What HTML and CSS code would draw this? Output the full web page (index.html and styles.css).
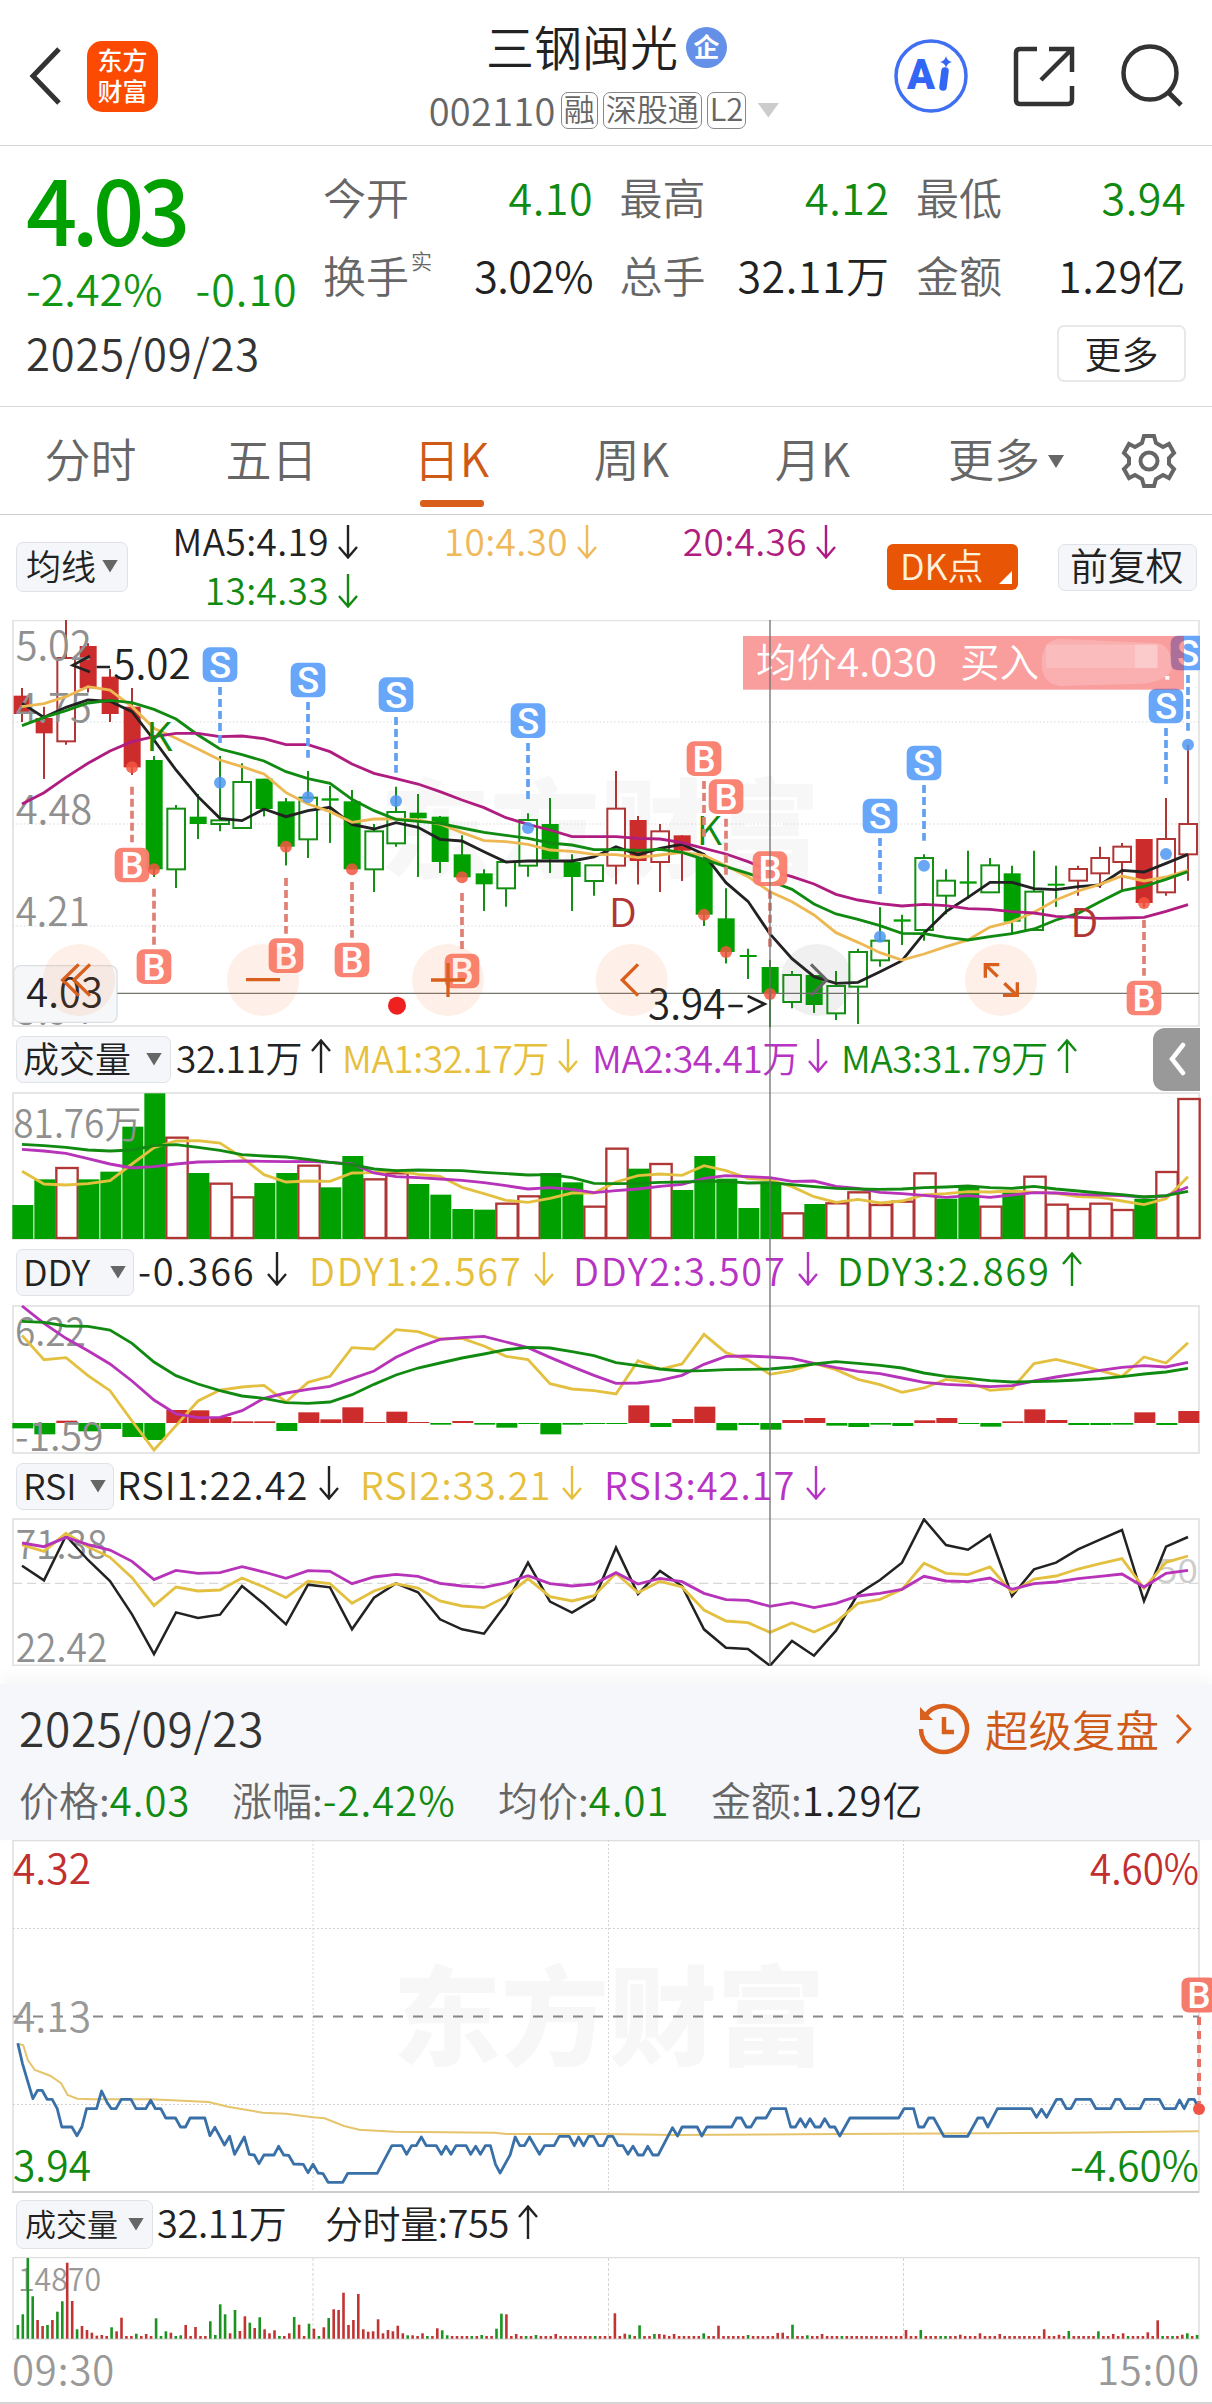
FILE: index.html
```html
<!DOCTYPE html>
<html lang="zh-CN">
<head>
<meta charset="utf-8">
<title>三钢闽光 002110</title>
<link rel="stylesheet" href="styles.css">
</head>
<body>
<svg class="defs" width="0" height="0">
  <symbol id="down" viewBox="0 0 20 34"><path d="M10 0V32M1 22L10 32.500L19 22" fill="none" stroke="currentColor" stroke-width="2.400"/></symbol>
  <symbol id="up" viewBox="0 0 20 34"><path d="M10 34V2M1 12L10 1.500L19 12" fill="none" stroke="currentColor" stroke-width="2.400"/></symbol>
</svg>

<header class="topbar">
  <div class="top-left">
    <svg width="32" height="60" viewBox="0 0 32 60"><path d="M30 3L4 30L30 57" fill="none" stroke="#333" stroke-width="5"/></svg>
    <div class="logo"><span>东方</span><span>财富</span></div>
  </div>
  <div class="top-title">
    <div class="name">三钢闽光<span class="ent">企</span></div>
    <div class="code"><span class="num">002110</span><span class="tag">融</span><span class="tag">深股通</span><span class="tag">L2</span><i class="tri tri-light"></i></div>
  </div>
  <div class="top-right">
    <svg width="74" height="74" viewBox="0 0 74 74"><circle cx="37" cy="37" r="35" fill="#fff" stroke="#3f6ff2" stroke-width="3.500"/><text x="13" y="50" class="ai" textLength="28" lengthAdjust="spacingAndGlyphs">A</text><path d="M51 32L49 48" stroke="#3366f5" stroke-width="7.500" stroke-linecap="round"/><path d="M52 17Q53 22 58 23Q53 24 52 29Q51 24 46 23Q51 22 52 17Z" fill="#3366f5"/></svg>
    <svg width="62" height="62" viewBox="0 0 62 62" fill="none" stroke="#333" stroke-width="4.500"><path d="M24 4H7Q3 4 3 8V55Q3 59 7 59H55Q59 59 59 55V41"/><path d="M36 4H59V27M58 5L28 35"/></svg>
    <svg width="64" height="64" viewBox="0 0 64 64" fill="none" stroke="#333" stroke-width="4.500"><circle cx="30" cy="29" r="26.500"/><path d="M48 48L61 61" stroke-width="5"/></svg>
  </div>
</header>

<section class="quote">
  <div class="price">
    <div class="last">4.03</div>
    <div class="change"><span>-2.42%</span><span>-0.10</span></div>
    <div class="day">2025/09/23</div>
  </div>
  <div class="stats">
    <div class="stat"><span>今开</span><b class="green">4.10</b></div>
    <div class="stat"><span>最高</span><b class="green">4.12</b></div>
    <div class="stat"><span>最低</span><b class="green">3.94</b></div>
    <div class="stat"><span>换手<sup>实</sup></span><b class="pct">3.02%</b></div>
    <div class="stat"><span>总手</span><b>32.11万</b></div>
    <div class="stat"><span>金额</span><b>1.29亿</b></div>
    <button class="more">更多</button>
  </div>
</section>

<nav class="tabs">
  <span>分时</span><span>五日</span><span class="on">日K</span><span>周K</span><span>月K</span><span>更多<i class="tri"></i></span>
  <svg width="56" height="56" viewBox="-28 -28 56 56" fill="none" stroke="#666" stroke-width="4"><path id="gear" d="M-5 -25H5L7 -18L14 -14L20 -17L25 -8L20 -3V3L25 8L20 17L14 14L7 18L5 25H-5L-7 18L-14 14L-20 17L-25 8L-20 3V-3L-25 -8L-20 -17L-14 -14L-7 -18Z"/><circle r="8.500"/></svg>
</nav>

<div class="stack">
  <div class="mabar">
    <span class="pill pill-ma">均线<i class="tri"></i></span>
    <div class="malist">
      <span>MA5:4.19<svg><use href="#down"/></svg></span>
      <span class="amber">10:4.30<svg><use href="#down"/></svg></span>
      <span class="magenta">20:4.36<svg><use href="#down"/></svg></span>
      <span class="green">13:4.33<svg><use href="#down"/></svg></span>
    </div>
    <span class="dk">DK点</span>
    <span class="pill pill-adj">前复权</span>
  </div>
  <svg id="kline" class="chart" width="1212" height="407" viewBox="0 60 3636 1221"></svg>

  <div class="bar bar-vol">
    <span class="pill">成交量<i class="tri"></i></span>
    <span>32.11万<svg><use href="#up"/></svg></span>
    <span class="yellow">MA1:32.17万<svg><use href="#down"/></svg></span>
    <span class="purple">MA2:34.41万<svg><use href="#down"/></svg></span>
    <span class="green">MA3:31.79万<svg><use href="#up"/></svg></span>
    <span class="fold"><svg viewBox="0 0 20 34"><path d="M16 3L5 17L16 31" fill="none" stroke="#fff" stroke-width="4.500" stroke-linecap="round"/></svg></span>
  </div>
  <svg id="vol" class="chart" width="1212" height="148" viewBox="0 216 3636 444"></svg>

  <div class="bar bar-ddy">
    <span class="pill">DDY<i class="tri"></i></span>
    <span>-0.366<svg><use href="#down"/></svg></span>
    <span class="yellow">DDY1:2.567<svg><use href="#down"/></svg></span>
    <span class="purple">DDY2:3.507<svg><use href="#down"/></svg></span>
    <span class="green">DDY3:2.869<svg><use href="#up"/></svg></span>
  </div>
  <svg id="ddy" class="chart" width="1212" height="149" viewBox="0 855 3636 447"></svg>

  <div class="bar bar-rsi">
    <span class="pill">RSI<i class="tri"></i></span>
    <span>RSI1:22.42<svg><use href="#down"/></svg></span>
    <span class="yellow">RSI2:33.21<svg><use href="#down"/></svg></span>
    <span class="purple">RSI3:42.17<svg><use href="#down"/></svg></span>
  </div>
  <svg id="rsi" class="chart" width="1212" height="148" viewBox="0 204 3636 444"></svg>
  <i class="cross"></i>
</div>

<section class="replay">
  <div class="replay-head">
    <span class="replay-day">2025/09/23</span>
    <a class="replay-link">
      <svg width="54" height="54" viewBox="0 0 54 54" fill="none" stroke="#d95f1c" stroke-width="4.500"><path d="M5 27A23 23 0 1 0 9 14"/><path d="M4 5V18H17Z" fill="#d95f1c" stroke="none"/><path d="M28 15V30H38"/></svg>
      超级复盘
      <svg width="20" height="32" viewBox="0 0 20 32"><path d="M3 2L16 16L3 30" fill="none" stroke="#d95f1c" stroke-width="2.800"/></svg>
    </a>
  </div>
  <div class="replay-row">
    <span>价格:<b class="green">4.03</b></span><span>涨幅:<b class="green">-2.42%</b></span><span>均价:<b class="green">4.01</b></span><span>金额:<b>1.29亿</b></span>
  </div>
</section>

<svg id="minute" class="chart" width="1212" height="353" viewBox="0 1840 1212 353"></svg>
<div class="bar bar-min">
  <span class="pill">成交量<i class="tri"></i></span>
  <span>32.11万</span>
  <span>分时量:755<svg><use href="#up"/></svg></span>
</div>
<svg id="minvol" class="chart" width="1212" height="83" viewBox="0 2257 1212 83"></svg>
<footer class="times"><span>09:30</span><span>15:00</span></footer>
<script src="charts.js"></script>
</body>
</html>
```
FILE: styles.css
```css
* { box-sizing: border-box; }
body {
  margin: 0;
  width: 1212px;
  height: 2404px;
  overflow: hidden;
  background: #fff;
  color: #222;
  font-family: "Noto Sans CJK SC", "Noto Sans", sans-serif;
  font-weight: 350;
}
b { font-weight: inherit; }
svg { display: block; flex: none; }
.defs { position: absolute; }
.green { color: #118a11; }
.amber { color: #efb95a; }
.yellow { color: #e6c03c; }
.magenta { color: #b01d80; }
.purple { color: #b733c4; }
.tri {
  width: 16px;
  height: 13px;
  background: #666;
  clip-path: polygon(0 0, 100% 0, 50% 100%);
  flex: none;
}
.tri-light { width: 22px; height: 15px; background: #ccc; margin-left: 6px; }

.topbar {
  height: 146px;
  border-bottom: 1px solid #d4d4d4;
  display: grid;
  grid-template-columns: 1fr auto 1fr;
  padding: 0 28px 0 29px;
}
.top-left { display: flex; align-items: center; gap: 26px; padding-top: 7px; }
.logo {
  width: 71px;
  height: 71px;
  border-radius: 15px;
  background: #fd4a03;
  color: #fff;
  font-weight: 500;
  font-size: 25px;
  line-height: 31px;
  display: flex;
  flex-direction: column;
  align-items: center;
  padding-top: 3px;
}
.top-title { display: flex; flex-direction: column; align-items: center; }
.name {
  font-size: 48px;
  line-height: 60px;
  padding-top: 15px;
  display: flex;
  align-items: center;
}
.ent {
  width: 41px;
  height: 41px;
  margin: 5px 0 0 8px;
  border-radius: 50%;
  background: #6490e8;
  color: #fff;
  font-size: 26px;
  line-height: 37px;
  text-align: center;
  font-weight: 700;
}
.code { display: flex; align-items: center; gap: 5px; color: #666; height: 38px; margin-top: 16px; padding-right: 5px; }
.num { font-size: 38px; line-height: 34px; letter-spacing: 0.300px; }
.tag {
  height: 37px;
  border: 1.500px solid #888;
  border-radius: 7px;
  font-size: 31px;
  line-height: 30px;
  padding: 0 2px;
}
.top-right { display: flex; align-items: center; justify-content: flex-end; gap: 45px; padding-top: 7px; }
.ai { font: 900 42px Roboto, sans-serif; fill: #3366f5; }

.quote { display: flex; height: 261px; border-bottom: 1px solid #d9d9d9; padding-left: 26px; }
.price { width: 297px; color: #119611; }
.last { font-size: 90px; font-weight: 500; line-height: 100px; letter-spacing: -5.500px; margin-top: 11px; color: #00a000; height: 100px; }
.change { display: flex; gap: 33px; font-size: 43px; line-height: 60px; white-space: nowrap; }
.change span:last-child { letter-spacing: 1px; }
.day { font-size: 43.500px; line-height: 60px; letter-spacing: 0.900px; color: #333; margin-top: 6px; }
.stats {
  display: grid;
  grid-template-columns: 269px 269px 269px;
  grid-template-rows: 78px 78px 58px;
  column-gap: 27.500px;
  padding-top: 11px;
}
.stat { display: flex; justify-content: space-between; font-size: 43px; line-height: 78px; color: #666; position: relative; white-space: nowrap; }
.stat b { color: #222; letter-spacing: 0.500px; margin-right: -1px; }
.stat .pct { letter-spacing: -0.600px; }
.stat b.green { color: #118a11; }
.stat sup { font-size: 21px; line-height: 20px; vertical-align: 24px; margin-left: 2px; }
.more {
  grid-column: 3;
  justify-self: end;
  width: 129px;
  height: 57px;
  margin: 12px -1px 0 0;
  border: 2px solid #e8e8e8;
  border-radius: 7px;
  background: #fff;
  font: inherit;
  font-size: 37px;
  line-height: 45px;
  padding: 0;
  color: #222;
}

.tabs {
  height: 108px;
  border-bottom: 1px solid #ccc;
  display: grid;
  grid-template-columns: repeat(5, 181px) 194px 56px;
  align-items: center;
  color: #666;
  font-size: 46px;
  line-height: 101px;
}
.tabs span { text-align: center; height: 107px; position: relative; }
.tabs span:nth-child(4), .tabs span:nth-child(5) { padding-right: 4px; }
.tabs .tri { display: inline-block; margin: 0 0 9px 8px; }
.tabs span:nth-child(6) { padding-left: 8px; }
.tabs svg { margin-left: 22px; }
.tabs .on { color: #cf5a18; padding-right: 2px; }
.tabs .on::after {
  content: "";
  position: absolute;
  left: 58px;
  bottom: 7px;
  width: 64px;
  height: 7px;
  border-radius: 3px;
  background: #d95e1c;
}

.stack { position: relative; }
.pill {
  display: flex;
  align-items: center;
  border: 1.500px solid #dfe2e6;
  border-radius: 7px;
  background: #f5f6f9;
  color: #222;
  font-size: 36px;
  line-height: 1;
}
.mabar { display: flex; height: 105px; padding: 27px 0 0 16px; font-size: 37px; }
.pill-ma { width: 112px; height: 50px; font-size: 35px; padding: 0 0 6px 9px; gap: 6px; }
.pill-ma .tri { margin-top: 4px; }
.malist {
  display: grid;
  grid-template-columns: 199px 239px 239px;
  grid-template-rows: 49px 50px;
  width: 736px;
  margin-top: -27px;
  padding: 3px 0 0 31px;
  line-height: 45px;
  letter-spacing: 0.400px;
}
.malist span { display: flex; justify-content: flex-end; gap: 9px; }
.malist svg, .bar > span > svg { width: 20px; height: 34px; margin-top: 7px; }
.dk {
  position: relative;
  width: 131px;
  height: 46px;
  margin: 2px 40px 0 23px;
  border-radius: 6px;
  background: #e85504;
  color: #fff0dc;
  font-size: 36px;
  line-height: 41px;
  padding-left: 13px;
}
.dk::after {
  content: "";
  position: absolute;
  right: 6px;
  bottom: 6px;
  width: 13px;
  height: 13px;
  background: #fff;
  clip-path: polygon(100% 0, 100% 100%, 0 100%);
}
.pill-adj { width: 139px; height: 47px; margin-top: 2px; font-size: 38px; padding: 0 0 7px 11px; letter-spacing: -0.300px; }

.bar { display: grid; height: 65px; padding-left: 16px; font-size: 38px; line-height: 60px; white-space: nowrap; }
.bar > span { display: flex; }
.bar > span > svg { margin: 12px 0 0 9px; }
.bar .pill { height: 47px; margin-top: 9px; padding: 0 8px 5px 6px; justify-content: space-between; letter-spacing: 0; }
.bar .pill .tri { margin-top: 4px; }
.bar-vol { grid-template-columns: 155px 171px 250px 249px 310px 47px; font-size: 37px; letter-spacing: -0.350px; }
.bar-vol > span:nth-child(2) { padding-left: 5px; }
.bar-vol .fold { width: 47px; height: 63px; background: #999; border-radius: 12px 0 0 12px; margin: 1px 0 0 2px; }
.bar-vol .fold svg { margin: 14px 0 0 14px; }
.bar-ddy { grid-template-columns: 118px 175px 264px 264px 250px; letter-spacing: 1.800px; }
.bar-ddy > span:nth-child(2) { padding-left: 4px; }
.bar-ddy .pill, .bar-rsi .pill { padding-right: 7px; }
.bar-ddy > span > svg { margin-left: 11px; }
.bar-rsi > span > svg { margin-left: 11px; }
.bar-rsi { height: 64px; grid-template-columns: 98px 246px 244px 250px; letter-spacing: 1px; }
.bar-rsi > span:nth-child(2) { padding-left: 3px; }
.bar-min { grid-template-columns: 137px 172px 300px; line-height: 58px; height: 64px; letter-spacing: -0.400px; }
.bar-min .pill { height: 49px; margin-top: 7px; font-size: 31px; padding-left: 8px; }
.bar-min > span:nth-child(2) { padding-left: 4px; }
.cross { position: absolute; left: 769px; top: 105px; width: 2px; height: 1046px; background: rgba(110, 110, 110, .65); }

.replay {
  height: 156px;
  margin-top: 18px;
  background: #f6f7fa;
  box-shadow: 0 -6px 14px rgba(0, 0, 0, .04);
  padding: 0 18px 0 19px;
}
.replay-head { display: flex; justify-content: space-between; align-items: center; height: 90px; }
.replay-day { font-size: 46px; color: #333; line-height: 87px; height: 90px; letter-spacing: 0.700px; }
.replay-link { display: flex; align-items: center; color: #cf5a18; font-size: 43.500px; line-height: 78px; gap: 15px; }
.replay-row { display: grid; grid-template-columns: 213px 266px 213px 1fr; font-size: 40px; line-height: 58px; color: #666; margin-top: -4px; }
.replay-row b { color: #222; letter-spacing: 1px; }
.replay-row b.green { color: #118a11; }
.times { display: flex; justify-content: space-between; padding: 0 12px 0 12px; font-size: 40px; line-height: 57px; height: 64px; border-bottom: 2px solid #d4d4d4; color: #999; letter-spacing: 0.900px; }

.chart { overflow: hidden; }
.chart text { font-family: "Noto Sans CJK SC", sans-serif; font-weight: 350; }
.chart .badge-t { font-family: Roboto, sans-serif; font-weight: 500; }
.chart .wm { font-weight: 900; fill: #f7f7f7; }
```
FILE: charts.js
```js
// All daily panels share one horizontal scale: 54 sessions, 66 units apart.
const X = i => 66 + 66 * i;
const L = 39, R = 3597;
const RED = '#cc2c2c', GREEN = '#00a000', DRED = '#b03535', DGREEN = '#118a11';
const YEL = '#e3c03f', PUR = '#b733b9';
const put = (id, parts) => { document.getElementById(id).innerHTML = parts.join(''); };
const rect = (x, y, w, h, a) => `<rect x="${x}" y="${y}" width="${w}" height="${h}" ${a}/>`;
const line = (x1, y1, x2, y2, a) => `<line x1="${x1}" y1="${y1}" x2="${x2}" y2="${y2}" ${a}/>`;
const text = (x, y, s, size, fill, len, a = '') =>
  `<text x="${x}" y="${y}" font-size="${size}" fill="${fill}" xml:space="preserve" ${len ? `textLength="${len}" lengthAdjust="spacingAndGlyphs"` : ''} ${a}>${s}</text>`;
const series = (ys, c, w = 8.5) =>
  `<polyline points="${ys.map((y, i) => X(i) + ',' + y).join(' ')}" fill="none" stroke="${c}" stroke-width="${w}"/>`;
const frame = (t, b) => rect(L, t, R - L, b - t, 'fill="none" stroke="#e2e2e2" stroke-width="5"');

// [kind, high, body top, body bottom, low]; upper case is filled
const candles = [
['R',264,287,342,366],['R',320,354,400,536],['r',60,174,424,434],['R',130,138,265,277],['R',207,230,342,366],['R',264,320,502,524],
['G',468,480,808,830],['g',615,626,808,864],['G',582,650,672,717],['g',468,661,672,694],['g',490,546,684,684],['G',536,536,627,649],
['G',594,604,740,796],['g',513,593,718,774],['G',558,595,602,728],['G',570,604,808,808],['g',672,694,808,876],['g',560,636,730,740],
['G',582,638,655,830],['G',648,650,786,819],['G',706,763,832,832],['G',808,820,853,932],['g',786,786,865,920],['g',640,660,797,830],
['G',594,672,778,819],['G',763,786,831,932],['g',796,796,843,887],['r',513,626,797,853],['R',648,660,783,853],['r',672,694,786,876],
['R',706,706,752,843],['G',763,774,944,978],['G',865,955,1056,1090],['G',1046,1065,1071,1137],['G',1080,1101,1182,1284],['g',1113,1125,1206,1225],
['G',1125,1125,1215,1238],['g',1113,1158,1240,1260],['g',1046,1056,1160,1272],['g',922,1022,1081,1100],['G',944,958,965,1035],['g',763,774,990,1022],
['g',808,842,887,943],['G',752,844,851,897],['g',774,796,877,877],['G',797,820,965,1000],['g',752,875,990,990],['G',797,851,856,920],
['r',797,807,842,887],['r',740,774,820,864],['r',729,740,786,870],['R',717,717,909,922],['r',594,717,877,887],['r',434,672,763,842]];
const ma5 = [310,352,322,300,304,335,420,510,590,655,662,627,650,632,622,673,687,668,682,718,723,755,786,783,783,783,771,740,764,745,733,763,848,904,1002,1076,1130,1150,1147,1115,1082,1000,935,892,847,847,866,869,860,855,811,816,790,763];
const ma10 = [320,311,290,260,270,320,385,415,447,480,500,522,578,612,635,667,657,657,660,672,698,722,725,733,750,754,763,764,773,765,757,766,797,830,875,905,945,998,1027,1058,1080,1062,1040,1020,981,965,937,900,873,853,828,843,831,811];
const ma13 = [377,352,332,309,301,308,328,357,405,447,464,483,515,536,550,598,632,658,664,670,684,697,706,715,729,735,749,749,751,748,757,778,800,820,843,868,912,942,958,977,1000,1001,1012,1020,1010,1001,987,960,940,905,872,859,838,815];
const ma20 = [612,578,532,490,453,425,410,400,400,410,408,416,434,434,455,492,520,536,552,575,600,623,653,673,690,710,710,710,715,717,728,745,762,785,812,830,852,883,900,911,918,913,917,926,928,935,939,949,952,955,954,952,934,914];
// [letter, session, badge y, dash from, dash to, dot y]
const marks = [['S',9,194,261,430,548],['S',13,240,306,473,592],['S',17,284,351,518,603],['S',23,362,429,597,684],['S',39,648,714,882,1010],['S',41,489,555,722,797],['S',52,318,384,552,762],['S',53,159,225,392,434],
['B',5,795,560,727,502],['B',6,1100,866,1034,808],['B',12,1067,834,1001,740],['B',15,1080,846,1013,808],['B',20,1113,879,1047,832],['B',31,476,543,710,944],['B',32,590,656,824,1056],['B',34,806,872,1041,1182],['B',51,1194,960,1127,909]];

const k = ['<clipPath id="kc"><rect x="36" y="60" width="3564" height="1224"/></clipPath>', frame(61, 1278)];
k.push(text(1140, 808, '东方财富', 322, '', 1320, 'class="wm"'));
for (const y of [366, 672, 978]) k.push(line(L, y, R, y, 'stroke="#d5d5d5" stroke-width="3" stroke-dasharray="4 7"'));
candles.forEach(([t, h, a, b, l], i) => {
  const red = t === 'R' || t === 'r', solid = t === 'R' || t === 'G', x = X(i);
  const c = red ? DRED : '#148f14';
  k.push(line(x, h, x, solid ? l : a, `stroke="${c}" stroke-width="6"`), line(x, b, x, l, `stroke="${c}" stroke-width="6"`));
  k.push(solid ? rect(x - 25, a, 51, Math.max(6, b - a), `fill="${red ? RED : GREEN}"`)
    : rect(x - 26, a, 53, b - a, `fill="#fff" stroke="${c}" stroke-width="6"`));
});
k.push(text(47, 180, '5.02', 120, '#909090', 228), text(47, 366, '4.75', 120, '#909090', 228), text(47, 672, '4.48', 120, '#909090', 230), text(47, 978, '4.21', 120, '#909090', 222), text(47, 1272, '3.94', 120, '#909090', 228));
k.push(series(ma5, '#222'), series(ma10, '#edb852'), series(ma13, DGREEN), series(ma20, '#b01d80'));
k.push(text(438, 452, 'K', 117, DGREEN, 80), text(2090, 734, 'K', 117, DGREEN, 76), text(1826, 980, 'D', 117, DRED, 84), text(3211, 1012, 'D', 117, DRED, 84));
k.push(rect(41, 1097, 310, 170, 'rx="20" fill="#f6f7f9" stroke="#dcdfe2" stroke-width="4"'));
k.push(line(352, 1180, R, 1180, 'stroke="#72756e" stroke-width="4"'), text(79, 1222, '4.03', 120, '#222', 230));
k.push('<path d="M270 168L218 196L270 216M290 201H330" fill="none" stroke="#222" stroke-width="8"/>', text(340, 237, '5.02', 122, '#222', 232));
k.push(text(1944, 1256, '3.94', 122, '#222', 232), '<path d="M2185 1218H2228M2243 1188L2294 1212L2243 1238" fill="none" stroke="#222" stroke-width="8"/>');
k.push('<g clip-path="url(#kc)">');
for (const [s, i, y, d1, d2, dot] of marks) {
  const x = X(i), blue = s === 'S';
  k.push(line(x, d1, x, d2, `stroke="${blue ? '#62a0f2' : '#e07f74'}" stroke-width="11" stroke-dasharray="24 12"`));
  k.push(`<circle cx="${x}" cy="${dot}" r="18" fill="${blue ? '#4f98f2' : '#f4553f'}" fill-opacity=".85"/>`);
  k.push(rect(x - 52, y - 52, 104, 104, `rx="22" fill="${blue ? '#62a2fa' : '#f97f6e'}" fill-opacity=".96"`));
  k.push(`<text class="badge-t" x="${x}" y="${y + 39}" font-size="110" text-anchor="middle" fill="#fff">${s}</text>`);
}
k.push('</g>');
for (const x of [237, 789, 1344, 1895, 3003]) k.push(`<circle cx="${x}" cy="1140" r="108" fill="#f57a2c" fill-opacity=".11"/>`);
k.push('<circle cx="2450" cy="1140" r="108" fill="#555" fill-opacity=".09"/>');
k.push('<path d="M236 1093L188 1140L236 1187M270 1093L222 1140L270 1187M738 1139H840M1293 1140H1395M1344 1089V1191M1914 1093L1867 1140L1914 1187M2956 1133V1094H2998M2957 1095L2993 1130M3052 1147V1186H3009M3051 1186L3013 1150" fill="none" stroke="#d95f1c" stroke-width="10"/>');
k.push('<path d="M2433 1093L2480 1140L2433 1187" fill="none" stroke="#666" stroke-width="9"/><circle cx="1191" cy="1217" r="27" fill="#ee2020"/>');
k.push(rect(2229, 108, 1323, 161, 'fill="#f23737" fill-opacity=".49"'), text(2268, 230, '均价4.030', 118, '#fff', 543), text(2881, 230, '买入', 118, '#fff', 236));
k.push('<path d="M3125 190Q3125 120 3180 116L3470 130Q3515 135 3515 200Q3510 250 3400 252L3180 258Q3125 250 3125 190Z" fill="#fff" fill-opacity=".2"/>', rect(3138, 134, 334, 70, 'fill="#fff" fill-opacity=".16"'), rect(3405, 134, 68, 70, 'fill="#fff" fill-opacity=".22"'), rect(3496, 228, 12, 11, 'fill="#fff"'));
put('kline', k);

const volume = 'G555 G478 r444 G478 G455 G320 G220 r353 G459 r491 r532 G489 G459 r437 G502 G408 r478 r460 G492 G524 G567 G569 r551 r529 G459 G487 r560 r386 G446 r432 G510 G408 G476 G564 G487 r580 G552 r550 r517 r555 r545 r460 G536 G498 r560 G517 r470 r554 r567 r551 r570 G536 r456 r237'.split(' ');
const v = [frame(219, 657)];
volume.forEach((s, i) => {
  const y = +s.slice(1), x = X(i);
  v.push(s[0] === 'G' ? rect(x - 29, y, 63, 657 - y, `fill="${GREEN}"`) : rect(x - 29, y, 64, 654 - y, `fill="#fff" stroke="${DRED}" stroke-width="7"`));
});
v.push(text(40, 355, '81.76万', 117, '#909090', 384));
v.push(series([454,492,495,491,482,432,383,363,362,369,412,464,486,483,484,459,458,452,463,469,502,521,541,547,535,519,519,486,467,462,466,437,452,475,480,500,530,547,538,549,543,525,521,515,516,513,517,520,530,532,543,554,536,470], YEL));
v.push(series([388,393,400,416,432,444,440,432,426,425,423,424,425,424,427,432,459,470,473,477,481,488,497,507,503,508,518,512,507,499,493,475,467,470,473,484,483,499,505,517,521,526,532,527,532,525,518,519,523,525,527,531,528,501], PUR));
v.push(series([373,377,382,390,393,390,377,374,382,391,404,408,411,418,427,434,447,452,450,451,452,457,461,465,464,473,490,491,490,487,486,484,484,489,488,494,500,505,507,508,507,503,501,498,503,505,499,507,513,519,524,531,527,514], DGREEN));
put('vol', v);

const ddyBars = [1225,1243,1202,1234,1227,1251,1260,1170,1171,1191,1204,1204,1233,1177,1198,1162,1206,1175,1206,1214,1203,1214,1223,1211,1243,1214,1212,1212,1156,1221,1197,1160,1231,1215,1229,1200,1194,1217,1221,1214,1218,1201,1194,1211,1220,1204,1168,1200,1215,1215,1214,1177,1215,1173];
const d = [frame(858, 1299)];
ddyBars.forEach((y, i) => d.push(rect(X(i) - 29, Math.min(y, 1209), 63, Math.max(3, Math.abs(y - 1209)), `fill="${y > 1209 ? GREEN : RED}"`)));
d.push(text(45, 978, '6.22', 117, '#909090', 212), text(45, 1292, '-1.59', 117, '#909090', 266));
d.push(series([946,1019,1013,1067,1112,1203,1290,1217,1143,1110,1101,1096,1146,1087,1069,983,987,929,935,957,955,978,1009,1019,1091,1107,1112,1122,1022,1048,1032,943,998,1020,1063,1052,1030,1049,1078,1094,1117,1104,1078,1086,1111,1106,1031,1018,1034,1052,1069,1011,1029,968], YEL));
d.push(series([858,910,955,992,1032,1083,1140,1182,1193,1192,1172,1135,1119,1108,1099,1076,1053,1012,982,958,953,949,966,983,1012,1040,1066,1090,1089,1081,1066,1033,1009,1008,1011,1015,1030,1043,1054,1061,1074,1087,1093,1096,1100,1097,1083,1071,1061,1051,1042,1037,1041,1027], PUR));
d.push(series([904,907,918,919,930,970,1026,1067,1092,1112,1128,1135,1148,1150,1146,1124,1093,1065,1044,1029,1014,1002,989,982,984,995,1007,1028,1037,1047,1053,1052,1049,1048,1047,1041,1032,1025,1030,1036,1044,1059,1069,1075,1082,1086,1085,1083,1080,1076,1070,1062,1056,1045], DGREEN));
put('ddy', d);

const r = [frame(207, 646), line(L, 400, R, 400, 'stroke="#d8d8d8" stroke-width="4" stroke-dasharray="28 14"')];
r.push(text(47, 326, '71.38', 117, '#909090', 275), text(47, 636, '22.42', 117, '#909090', 275), text(3470, 398, '50', 100, '#ccc', 124));
r.push(series([347,391,257,330,393,493,612,487,504,494,408,462,523,404,412,538,443,400,427,508,538,551,462,338,455,488,448,293,432,363,408,538,593,597,647,573,617,542,432,390,338,208,285,299,255,438,358,338,298,269,240,453,290,261], '#222', 7.5));
r.push(series([285,304,250,290,322,383,467,411,423,420,384,411,443,394,401,460,423,401,414,453,468,473,440,386,440,453,437,370,428,394,411,480,513,518,547,519,546,516,460,448,418,340,370,374,351,427,387,378,357,341,326,415,337,318], YEL));
r.push(series([279,290,262,284,300,334,389,361,370,368,350,366,385,362,364,401,381,373,379,400,408,412,399,377,401,408,402,368,402,385,395,430,449,451,469,458,473,460,438,430,418,379,393,395,384,418,401,396,386,379,372,411,370,361], PUR));
put('rsi', r);

// Intraday panel: first and second half-day traces, joined at 1568 trace units
const am = '46,640 58,700 72,755 85,806 97,781 109,781 122,808 135,808 148,836 160,891 186,891 199,917 212,891 224,836 250,836 263,783 276,815 288,836 300,836 314,808 339,808 352,836 377,836 390,811 402,836 416,836 429,864 454,864 467,891 480,891 492,864 530,864 543,917 556,892 581,945 594,919 607,973 632,921 645,973 658,975 670,1001 683,975 709,975 721,949 734,975 747,976 760,1002 785,1003 797,1028 810,1003 823,1029 836,1031 849,1057 887,1057 900,1030 976,1030 1014,947 1040,947 1052,973 1065,947 1077,947 1090,921 1103,947 1129,947 1142,973 1154,949 1167,973 1180,947 1206,947 1218,973 1231,949 1243,973 1256,947 1269,947 1282,1003 1294,1029 1320,975 1333,921 1345,947 1357,947 1370,921 1396,973 1409,947 1434,947 1447,919 1473,919 1486,947 1497,921 1510,947 1523,919 1536,919 1549,947 1561,947';
const pm = '5,919 18,919 31,947 44,947 57,973 70,949 83,975 96,975 108,949 121,975 135,975 172,893 185,918 197,891 236,891 248,918 261,891 325,891 338,864 350,864 363,891 375,891 389,864 414,864 428,836 465,836 478,891 490,891 503,866 516,891 528,866 541,891 554,891 566,866 579,891 592,891 605,918 631,864 757,864 771,836 796,836 809,891 822,891 835,864 848,864 874,919 936,919 962,864 976,864 988,891 1013,836 1101,836 1114,862 1127,838 1140,862 1166,808 1178,808 1191,836 1203,836 1216,808 1254,808 1268,836 1306,836 1318,808 1330,808 1344,836 1382,836 1394,808 1432,808 1445,836 1473,836 1484,810 1496,836 1508,808 1522,808 1534,836';
const avg = '46,642 60,645 72,690 90,720 130,737 158,760 175,795 200,806 240,808 390,808 540,816 590,830 680,848 740,851 810,862 840,865 890,888 930,899 1020,905 1280,908 1310,912 1568,912 1748,915 2168,912 2568,910 2768,908 3102,904';
const scale = (s, off = 0) => s.split(' ').map(p => { const [x, y] = p.split(','); return ((+x + off) / 2.5875).toFixed(1) + ',' + (1830 + y / 3).toFixed(1); }).join(' ');
const GRIDX = [313, 608.5, 903.5];
const m = [text(393, 2057, '东方财富', 108, '', 432, 'class="wm"'), rect(13, 1840.500, 1186, 351.500, 'fill="none" stroke="#dedede" stroke-width="1.500"'), line(12, 2192, 1199, 2192, 'stroke="#ccc" stroke-width="2"')];
for (const x of GRIDX) m.push(line(x, 1840, x, 2192, 'stroke="#d5d5d5" stroke-dasharray="2 2"'));
for (const y of [1928.5, 2104.5]) m.push(line(13, y, 1199, y, 'stroke="#d5d5d5" stroke-dasharray="2 2"'));
m.push(line(13, 2016.5, 1199, 2016.5, 'stroke="#888" stroke-width="2" stroke-dasharray="10 10"'));
m.push(`<polyline points="${scale(avg)}" fill="none" stroke="#e5c46c" stroke-width="2"/>`);
m.push(`<polyline points="${scale(am)} ${scale(pm, 1568)}" fill="none" stroke="#3a70a8" stroke-width="2.800" stroke-linejoin="round"/>`);
m.push(text(13, 1884, '4.32', 41, '#c22f2f', 78), text(13, 2032, '4.13', 41, '#999', 78), text(13, 2181, '3.94', 41, DGREEN, 78));
m.push(text(1090, 1884, '4.60%', 41, '#c22f2f', 109), text(1070, 2181, '-4.60%', 41, DGREEN, 129));
m.push(line(1199, 2017, 1199, 2103, 'stroke="#ec6f62" stroke-width="4" stroke-dasharray="8 6"'), '<circle cx="1199" cy="2109" r="6" fill="#f05446"/>');
m.push(rect(1181.5, 1977.5, 35, 35, 'rx="7" fill="#f57c6c"'), '<text class="badge-t" x="1199" y="2008" font-size="37" text-anchor="middle" fill="#fff">B</text>');
put('minute', m);

// Minute volume: bars that rise above the floor, as minute:top; g marks a falling minute
const peaks = '0:g405 1:g373 2:g204 3:g319 4:r390 5:r408 6:g405 7:r390 8:g365 9:g334 10:r218 11:r333 12:g418 13:r408 14:r420 15:r428 16:r437 17:r435 19:g412 20:r424 21:r383 24:g431 26:r432 28:g385 29:g438 30:g424 31:r428 32:g438 33:g436 34:r405 36:r411 39:g394 40:g435 41:g343 42:g373 43:r430 44:g360 45:r423 46:r379 47:g398 48:r414 49:g382 50:r418 51:r430 52:r421 53:g438 55:r430 56:g381 57:r404 59:g401 60:r416 61:g438 62:r412 63:g384 64:r358 65:r360 66:r308 67:r405 68:r390 69:r312 70:r418 71:r425 72:r424 73:r388 74:r430 75:r420 76:r424 77:r407 78:r430 79:g436 80:r436 82:r430 83:g438 85:r415 86:g421 87:g436 92:g438 94:g435 97:g416 98:g371 99:r373 101:r432 103:g438 105:g435 109:r432 117:g438 121:r370 123:r431 124:g434 126:g406 129:g432 130:r432 131:r434 133:r432 139:g430 142:r407 148:g435 154:r429 155:r428 157:g404 160:g436 163:r432 167:g438 180:r420 183:g420 187:g438 188:g438 191:r434 195:r430 199:r432 208:r418 211:r434 213:g423 219:g424 222:r432 224:r430 225:g438 229:r427 231:r391 232:g438 234:g438 236:r434 237:g430 239:g435';
const map = Object.fromEntries(peaks.split(' ').map(p => p.split(':')));
const q = [rect(13, 2257.5, 1186, 81.5, 'fill="none" stroke="#dedede" stroke-width="1.500"'), text(18, 2290.5, '14870', 31, '#999', 83)];
for (const x of GRIDX) q.push(line(x, 2258, x, 2338, 'stroke="#d5d5d5" stroke-dasharray="3 2"'));
for (let i = 0; i < 240; i++) {
  const s = map[i] || 'r438', y = 2190 + s.slice(1) / 3;
  q.push(rect((16.6 + i * 4.934).toFixed(1), y.toFixed(1), 2.6, (2338.7 - y).toFixed(1), `fill="${s[0] === 'g' ? '#1a9320' : '#c23434'}"`));
}
put('minvol', q);
```
